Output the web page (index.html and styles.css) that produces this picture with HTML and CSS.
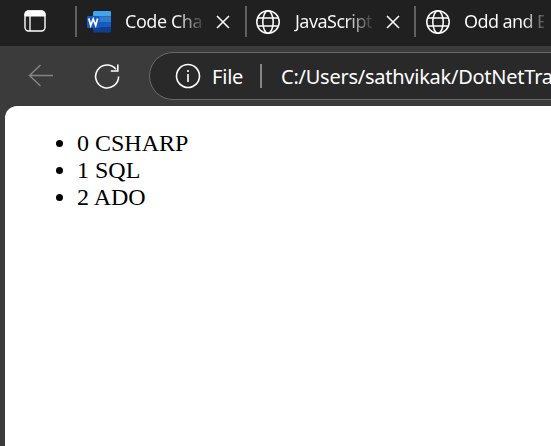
FILE: index.html
```
<!DOCTYPE html>
<html lang="en">
<head>
<meta charset="utf-8">
<title>Browser</title>
<link rel="stylesheet" href="styles.css">
</head>
<body>
<div class="window">
  <header class="tabs">
    <div class="tab-actions">
      <svg width="22" height="22" viewBox="0 0 22 22" fill="none" stroke="#fff"><rect x="1" y="1" width="20" height="20" rx="3.5" stroke-width="1.4"/><path d="M1 6V4q0-3 3-3h14q3 0 3 3v2z" fill="#fff"/><path d="M6 6v15" stroke-width="1.3"/></svg>
    </div>
    <div class="tab">
      <svg class="favicon" width="24" height="22" viewBox="0 0 24 22"><path d="M7.500 0H23q1 0 1 1v4.500H6V1.500Q6 0 7.500 0z" fill="#41a5ee"/><path d="M6 5.500h18V11H6z" fill="#2b7cd3"/><path d="M6 11h18v5H6z" fill="#185abd"/><path d="M6 16h18v4.500q0 1-1 1H7.500Q6 21.500 6 20z" fill="#103f91"/><rect y="5" width="12.500" height="12" rx="1" fill="#185abd"/><path d="M1.800 7.500l1.900 7L6.200 8l2.500 6.500 1.900-7" fill="none" stroke="#fff" stroke-width="1.700"/></svg>
      <span class="title code">Code Cha</span>
      <svg class="close" width="14" height="14" viewBox="0 0 14 14"><path d="M1 1l12 12M13 1L1 13"/></svg>
    </div>
    <div class="tab">
      <svg class="favicon globe" width="24" height="26" viewBox="0 0 24 26"><circle cx="12" cy="13" r="11.200"/><ellipse cx="12" cy="13" rx="5.200" ry="11.200"/><path d="M2 9h20M2 17h20"/></svg>
      <span class="title js">JavaScript</span>
      <svg class="close" width="14" height="14" viewBox="0 0 14 14"><path d="M1 1l12 12M13 1L1 13"/></svg>
    </div>
    <div class="tab last">
      <svg class="favicon globe" width="24" height="26" viewBox="0 0 24 26"><circle cx="12" cy="13" r="11.200"/><ellipse cx="12" cy="13" rx="5.200" ry="11.200"/><path d="M2 9h20M2 17h20"/></svg>
      <span class="title odd">Odd and E</span>
    </div>
  </header>
  <nav class="toolbar">
    <svg class="back" width="26" height="24" viewBox="0 0 26 24"><path d="M25 11.500H1.500M12.500 1L1.500 11.500l11 10.500"/></svg>
    <svg class="reload" width="26" height="26" viewBox="0 0 26 26"><path d="M24.600 13.500A11.500 11.500 0 1 1 22 6.200M23.800 1.500v6.500h-7"/></svg>
    <div class="address">
      <svg class="info" width="26" height="26" viewBox="0 0 26 26"><circle cx="13" cy="13" r="11.500"/><path d="M13 11v8M13 7v2"/></svg>
      <span class="file">File</span>
      <i class="divider"></i>
      <span class="url">C:/Users/sathvikak/DotNetTra</span>
    </div>
  </nav>
  <main class="page">
    <ul>
      <li>0 CSHARP</li>
      <li>1 SQL</li>
      <li>2 ADO</li>
    </ul>
  </main>
</div>
</body>
</html>
```
FILE: styles.css
```
* { box-sizing: border-box; }
body { margin: 0; }
svg { flex: none; display: block; }
.window {
  height: 446px;
  overflow: hidden;
  display: flex;
  flex-direction: column;
  background: #3b3b3b;
  color: #fff;
  font-family: "Noto Sans", "Open Sans", sans-serif;
}
.tabs {
  height: 46px;
  flex: none;
  display: flex;
  align-items: flex-start;
  padding-top: 6px;
  background: #202020;
}
.tab-actions {
  width: 75px;
  height: 30px;
  flex: none;
  display: flex;
  align-items: center;
  padding-left: 24px;
}
.tab {
  width: 170px;
  height: 31px;
  flex: none;
  display: flex;
  align-items: center;
  padding-left: 10px;
  border-left: 2px solid #606060;
}
.tab:nth-child(3) { width: 169px; padding-left: 9px; }
.favicon { margin-right: 14px; }
.globe { fill: none; stroke: #fff; stroke-width: 1.5; }
.title {
  width: 78px;
  margin-right: 13px;
  padding-bottom: 1px;
  overflow: hidden;
  white-space: nowrap;
  font-size: 18px;
  line-height: 26px;
  color: transparent;
  background: linear-gradient(90deg, #fff 66%, #202020 104%);
  -webkit-background-clip: text;
  background-clip: text;
}
.code { letter-spacing: -0.45px; }
.js { margin-right: 14px; padding-left: 1px; letter-spacing: -0.55px; }
.odd { width: 80px; letter-spacing: -0.6px; background-image: linear-gradient(90deg, #fff 74%, #202020 106%); }
.close { fill: none; stroke: #fff; stroke-width: 1.5; }
.toolbar {
  height: 60px;
  flex: none;
  display: flex;
  align-items: center;
  padding-left: 28px;
}
.back { fill: none; stroke: #858585; stroke-width: 1.4; }
.reload { margin-left: 40px; fill: none; stroke: #fff; stroke-width: 1.6; }
.address {
  width: 430px;
  height: 48px;
  flex: none;
  display: flex;
  align-items: center;
  margin-left: 29px;
  padding-left: 25px;
  background: #292929;
  border: 1px solid #6a6a6a;
  border-radius: 24px;
  font-size: 20px;
  white-space: nowrap;
}
.info { fill: none; stroke: #fff; stroke-width: 1.6; }
.file { width: 48px; margin-left: 11px; letter-spacing: -0.2px; }
.divider { width: 2px; height: 24px; background: #858585; }
.url { margin-left: 19px; letter-spacing: -0.25px; }
.page {
  flex: 1;
  margin-left: 5px;
  padding: 24px 12px;
  background: #fff;
  border-top-left-radius: 12px;
  color: #000;
  font: 24px/27px "Liberation Serif", serif;
}
.page ul { margin: 0; padding-left: 60px; }
```
